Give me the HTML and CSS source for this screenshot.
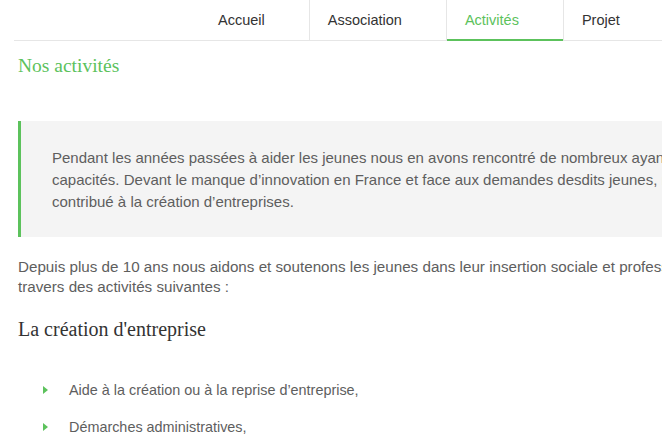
FILE: index.html
```html
<!DOCTYPE html>
<html lang="fr">
<head>
  <meta charset="UTF-8" />
  <meta name="viewport" content="width=device-width, initial-scale=1.0"/>
  <title>Nos activités</title>
  <link rel="stylesheet" href="styles.css">
</head>
<body>
  <div class="page">
    <ul class="menu">
      <li><a href="#">Accueil</a></li>
      <li><a href="#">Association</a></li>
      <li class="active"><a href="#">Activités</a></li>
      <li><a href="#">Projet</a></li>
    </ul>

    <div class="content">
      <h1 class="page-title">Nos activités</h1>

      <blockquote class="intro">
        Pendant les années passées à aider les jeunes nous en avons rencontré de nombreux ayant des idées<br>
        capacités. Devant le manque d’innovation en France et face aux demandes desdits jeunes, nous<br>
        contribué à la création d’entreprises.
      </blockquote>

      <p class="lead">
        Depuis plus de 10 ans nous aidons et soutenons les jeunes dans leur insertion sociale et professionnelle<br>
        travers des activités suivantes :
      </p>

      <h2 class="section-title">La création d'entreprise</h2>

      <ul class="arrows">
        <li>Aide à la création ou à la reprise d’entreprise,</li>
        <li>Démarches administratives,</li>
        <li>Recherche de financements,</li>
      </ul>
    </div>
  </div>
</body>
</html>
```

FILE: styles.css
```css
body {
  margin: 0;
  background: #fff;
  font-family: 'Liberation Sans', Arial, sans-serif;
  color: #5e5e5e;
  overflow: hidden;
}
.page {
  width: 1000px;
}
.menu {
  display: flex;
  list-style: none;
  margin: 0 0 0 14px;
  padding: 0 0 0 186px;
  height: 40px;
  border-bottom: 1px solid #e6e6e6;
}
.menu li {
  position: relative;
  border-right: 1px solid #e6e6e6;
}
.menu a {
  display: block;
  padding: 0 44px 0 18px;
  line-height: 40px;
  font-size: 14.5px;
  color: #333;
  text-decoration: none;
}
.menu .active a {
  color: #5cc25c;
}
.menu .active::after {
  content: '';
  position: absolute;
  left: 0;
  right: 0;
  bottom: -1px;
  height: 2px;
  background: #5cc25c;
}
.content {
  padding-left: 18px;
}
.page-title {
  margin: 13px 0 0;
  font-family: 'Liberation Serif', serif;
  font-weight: normal;
  font-size: 19.5px;
  line-height: 24px;
  color: #5cc25c;
}
.intro {
  margin: 43px 0 0;
  padding: 26px 0 24px 31px;
  border-left: 3px solid #5cc25c;
  background: #f4f4f4;
  font-size: 15px;
  line-height: 22px;
  white-space: nowrap;
}
.lead {
  margin: 20px 0 0;
  font-size: 15.2px;
  line-height: 20px;
  white-space: nowrap;
}
.section-title {
  margin: 20px 0 0;
  font-family: 'Liberation Serif', serif;
  font-weight: normal;
  font-size: 20px;
  line-height: 24px;
  color: #333;
}
.arrows {
  list-style: none;
  margin: 39px 0 0;
  padding: 0 0 0 51px;
}
.arrows li {
  position: relative;
  font-size: 14.4px;
  line-height: 20px;
  margin-bottom: 17px;
}
.arrows li::before {
  content: '';
  position: absolute;
  left: -26px;
  top: 6px;
  border-left: 5px solid #5cc25c;
  border-top: 4px solid transparent;
  border-bottom: 4px solid transparent;
}
```
